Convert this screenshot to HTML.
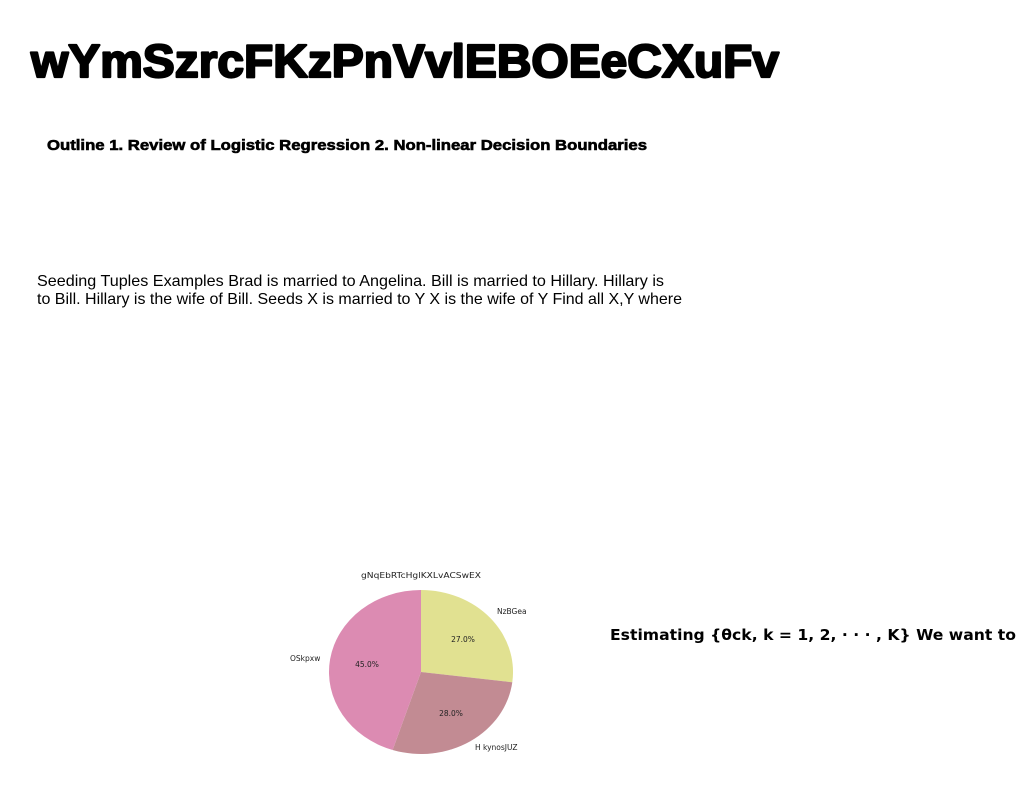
<!DOCTYPE html>
<html><head><meta charset="utf-8"><style>
html,body{margin:0;padding:0;background:#fff;width:1024px;height:788px;overflow:hidden}
svg{display:block}
</style></head><body>
<svg width="1024" height="788" xmlns="http://www.w3.org/2000/svg">
<text x="31" y="77" font-family="Liberation Sans, sans-serif" font-weight="bold" font-size="46" stroke="#000" stroke-width="2.2" stroke-linejoin="round" textLength="748" lengthAdjust="spacingAndGlyphs">wYmSzrcFKzPnVvlEBOEeCXuFv</text>
<text x="47" y="150" font-family="Liberation Sans, sans-serif" font-weight="bold" font-size="15" stroke="#000" stroke-width="0.6" textLength="600" lengthAdjust="spacingAndGlyphs">Outline 1. Review of Logistic Regression 2. Non-linear Decision Boundaries</text>
<text x="37" y="286" font-family="Liberation Sans, sans-serif" font-size="16" textLength="627" lengthAdjust="spacingAndGlyphs">Seeding Tuples Examples Brad is married to Angelina. Bill is married to Hillary. Hillary is</text>
<text x="37" y="304" font-family="Liberation Sans, sans-serif" font-size="16" textLength="645" lengthAdjust="spacingAndGlyphs">to Bill. Hillary is the wife of Bill. Seeds X is married to Y X is the wife of Y Find all X,Y where</text>
<text x="610" y="640" font-family="DejaVu Sans, sans-serif" font-weight="bold" font-size="15" textLength="406" lengthAdjust="spacingAndGlyphs">Estimating {θck, k = 1, 2, · · · , K} We want to</text>
<g font-family="DejaVu Sans, sans-serif" fill="#222">
<text x="421" y="578" font-size="8" text-anchor="middle" textLength="120" lengthAdjust="spacingAndGlyphs">gNqEbRTcHglKXLvACSwEX</text>
<path d="M421,672 L421,590 A92,82 0 0 1 512.3,682.3 Z" fill="#e1e191"/>
<path d="M421,672 L512.3,682.3 A92,82 0 0 1 392.6,750 Z" fill="#c28b93"/>
<path d="M421,672 L392.6,750 A92,82 0 0 1 421,590 Z" fill="#dc8bb2"/>
<text x="497" y="614" font-size="7.5">NzBGea</text>
<text x="463" y="642" font-size="7.5" text-anchor="middle">27.0%</text>
<text x="290" y="661" font-size="7.5">OSkpxw</text>
<text x="367" y="667" font-size="7.5" text-anchor="middle">45.0%</text>
<text x="451" y="716" font-size="7.5" text-anchor="middle">28.0%</text>
<text x="475" y="750" font-size="7.5">H kynosJUZ</text>
</g>
</svg>
</body></html>
